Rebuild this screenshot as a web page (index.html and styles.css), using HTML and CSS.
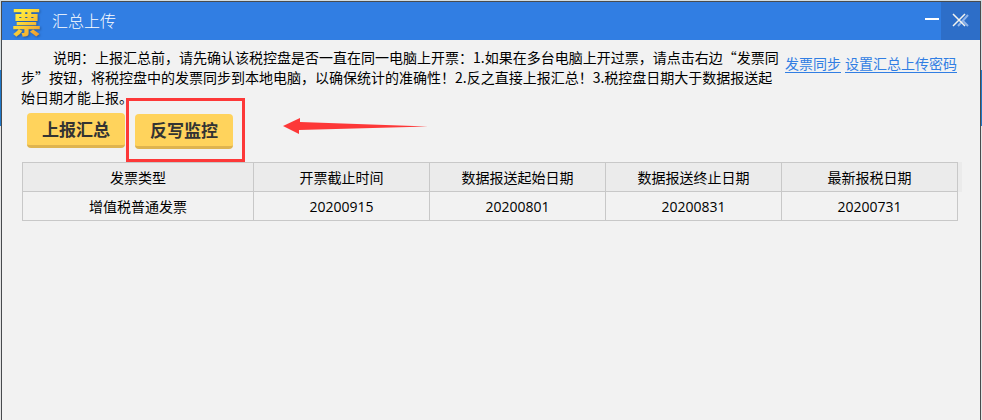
FILE: index.html
```html
<!DOCTYPE html>
<html lang="zh-CN">
<head>
  <meta charset="UTF-8">
  <meta name="viewport" content="width=device-width, initial-scale=1.0">
  <title>汇总上传</title>
  <link rel="stylesheet" href="styles.css">
</head>
<body>
  <div class="window">
    <header class="titlebar">
      <span class="logo">票</span>
      <h1 class="title">汇总上传</h1>
      <button class="win-btn" type="button" aria-label="最小化">
        <svg width="16" height="16" viewBox="0 0 16 16"><path d="M1 7h14" stroke="#fff" stroke-width="2"/></svg>
      </button>
      <button class="win-btn close-btn" type="button" aria-label="关闭">
        <svg width="20" height="16" viewBox="0 0 20 16">
          <path d="M17 3L7 14M12 9l5 5" stroke="#8fb4ea" stroke-width="2"/>
          <path d="M2 2l12 12M14 2L2 14" stroke="#f4f4ee" stroke-width="1.500"/>
        </svg>
      </button>
    </header>

    <main class="content">
      <div class="intro">
        <p class="note">说明：上报汇总前，请先确认该税控盘是否一直在同一电脑上开票：1.如果在多台电脑上开过票，请点击右边“发票同步”按钮，将税控盘中的发票同步到本地电脑，以确保统计的准确性！2.反之直接上报汇总！3.税控盘日期大于数据报送起始日期才能上报。</p>
        <nav class="links">
          <a href="#sync">发票同步</a>
          <a href="#password">设置汇总上传密码</a>
        </nav>
      </div>

      <div class="actions">
        <button class="btn" type="button">上报汇总</button>
        <div class="marked">
          <button class="btn" type="button">反写监控</button>
        </div>
        <svg class="arrow" width="146" height="18" viewBox="0 0 146 18">
          <path d="M0 9L17 1V5L145 9.500L16 13V17Z" fill="#fd3838"/>
        </svg>
      </div>

      <div class="table-wrap">
        <table class="data">
          <thead>
            <tr>
              <th class="type-col">发票类型</th>
              <th>开票截止时间</th>
              <th>数据报送起始日期</th>
              <th>数据报送终止日期</th>
              <th>最新报税日期</th>
            </tr>
          </thead>
          <tbody>
            <tr>
              <td>增值税普通发票</td>
              <td>20200915</td>
              <td>20200801</td>
              <td>20200831</td>
              <td>20200731</td>
            </tr>
          </tbody>
        </table>
      </div>
    </main>
  </div>
</body>
</html>
```
FILE: styles.css
```css
* {
  box-sizing: border-box;
}

body {
  margin: 0;
  padding: 1px 1px 0;
  min-height: 100vh;
  display: flex;
  font-family: "Noto Sans CJK SC", sans-serif;
  font-size: 14px;
  color: #000;
  background: linear-gradient(#d3dce0 70px, #1f78c8 70px, #1f78c8 126px, #e4e4e4 126px);
}

.window {
  flex: 1;
  border: 1px solid #484b4e;
  border-bottom: none;
  background: #f2f2f2;
}

/* title bar */
.titlebar {
  display: flex;
  align-items: center;
  height: 38px;
  padding-left: 10px;
  background: #317ee3;
  color: #fff;
}

.logo {
  width: 30px;
  font-size: 29px;
  font-weight: 900;
  line-height: 38px;
  color: transparent;
  background: linear-gradient(135deg, #ffe83c 30%, #f0a030 85%);
  -webkit-background-clip: text;
  background-clip: text;
  filter: drop-shadow(1px 1px 1px #2358a0);
}

.title {
  flex: 1;
  margin: 0 0 0 10px;
  padding-bottom: 2px;
  font-size: 16px;
  font-weight: 300;
}

.win-btn {
  display: flex;
  align-items: center;
  justify-content: center;
  height: 38px;
  padding: 0 0 2px;
  border: none;
  background: none;
}

.close-btn {
  width: 39px;
  background: #2d6ec8;
}

.win-btn + .win-btn {
  margin-left: 1px;
}

/* content */
.content {
  padding: 7px 18px 0 19px;
}

.intro {
  display: flex;
  justify-content: space-between;
}

.note {
  width: 762px;
  margin: 0;
  text-indent: 32px;
  line-height: 20px;
}

.links {
  display: flex;
  gap: 4px;
  padding-top: 6px;
  margin-right: 5px;
  white-space: nowrap;
}

.links a {
  height: 20px;
  line-height: 20px;
  color: #317ee3;
  text-decoration: none;
  border-bottom: 1px solid #317ee3;
}

.actions {
  display: flex;
  align-items: center;
  height: 64px;
  margin-top: -9px;
  padding-left: 6px;
}

.btn {
  display: block;
  width: 98px;
  height: 35px;
  padding: 0;
  border: none;
  border-bottom: 3px solid #dfb44f;
  border-radius: 4px;
  background: #ffd35c;
  color: #333;
  font-family: inherit;
  font-size: 17px;
  font-weight: bold;
  line-height: 32px;
}

.marked {
  margin-left: 1px;
  padding: 13px 9px 10px 6px;
  border: 3px solid #fd3838;
}

.arrow {
  margin: 0 0 8px 38px;
}

/* table, the header strip runs a little past the last column */
.table-wrap {
  margin-left: 1px;
  padding-right: 4px;
  background: linear-gradient(#ebebeb, #ebebeb) no-repeat right top / 4px 30px;
}

.data {
  width: 100%;
  border-collapse: collapse;
  table-layout: fixed;
  font-family: "Open Sans", "Noto Sans CJK SC", sans-serif;
}

.data th,
.data td {
  height: 29px;
  padding: 2px 0 0;
  border: 1px solid #c8c8c8;
  font-weight: normal;
  line-height: 20px;
  text-align: center;
}

.data th {
  background: #ebebeb;
}

.type-col {
  width: 24.7%;
}
```
